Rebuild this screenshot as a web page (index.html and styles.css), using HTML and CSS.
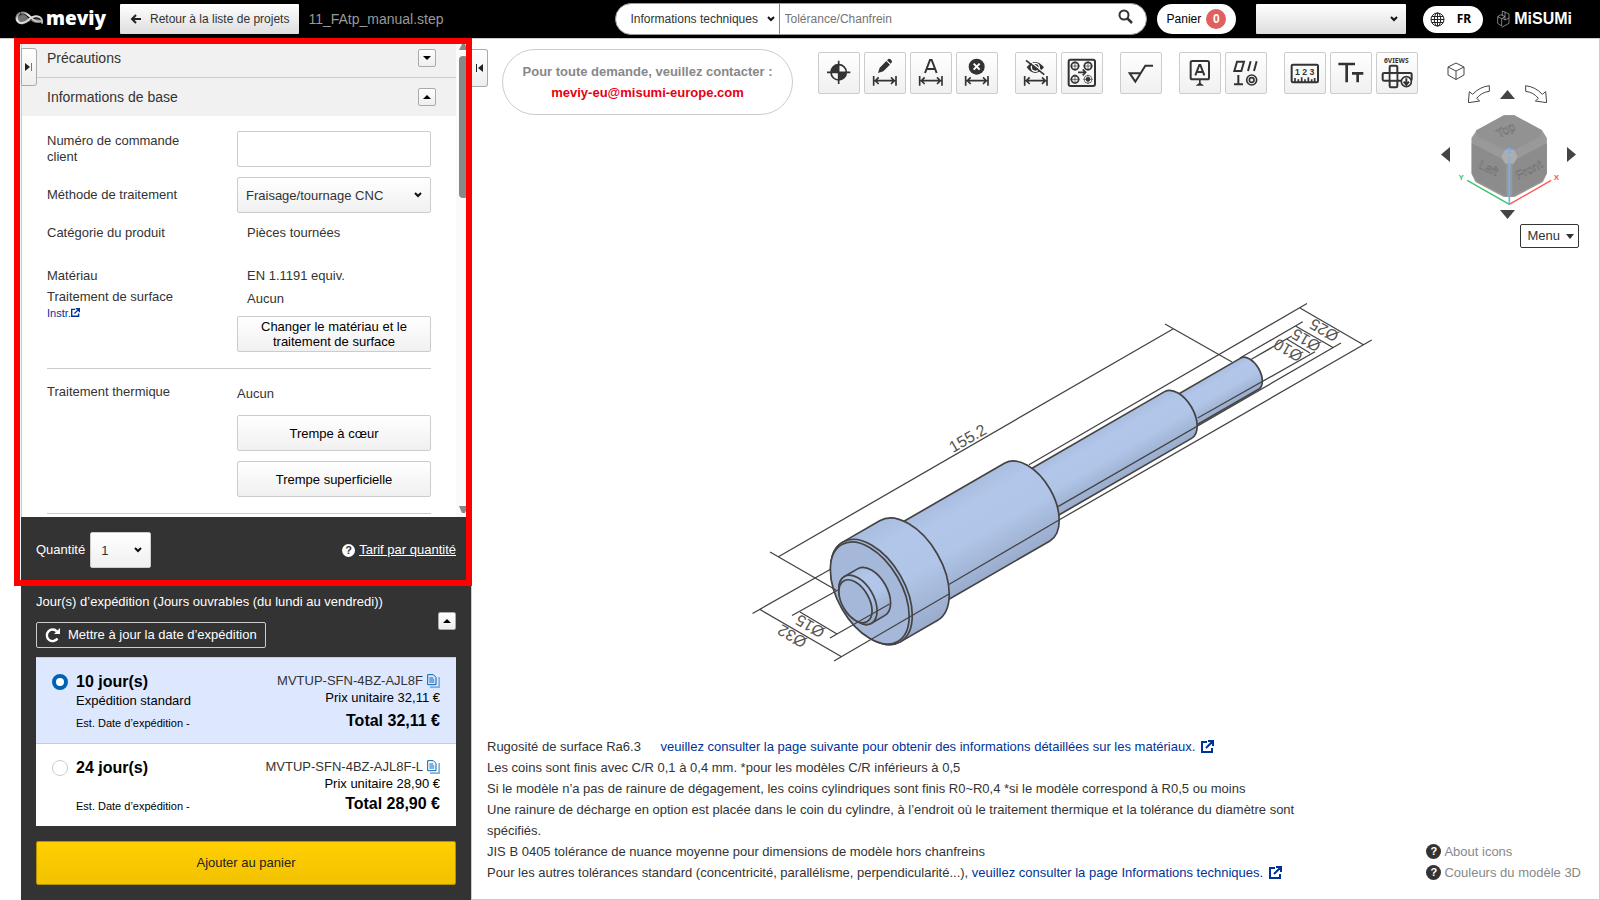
FILE: index.html
```html
<!DOCTYPE html>
<html lang="fr">
<head>
  <meta charset="UTF-8">
  <meta name="viewport" content="width=device-width, initial-scale=1.0">
  <title>meviy</title>
  <link rel="stylesheet" href="styles.css">
</head>
<body>
  <header class="header">
    <a class="logo" href="#" aria-label="meviy">
      <svg width="30" height="18" viewBox="0 0 90 54">
        <defs>
          <linearGradient id="silver" x1="0" x2="1" y1="0" y2="1">
            <stop offset="0" stop-color="#666"/>
            <stop offset=".35" stop-color="#eee"/>
            <stop offset="1" stop-color="#aaa"/>
          </linearGradient>
        </defs>
        <path d="M30 7C12 2 1 12 1 24c0 14 14 22 28 17c10-3 20-13 30-15c12-2 18 2 17 10c-2 5-16 4-24-1C42 29 34 12 22 12c-4 0-8 3-9 7C12 10 20 5 30 7z" fill="url(#silver)" opacity=".5"/>
        <path d="M16 8C4 14 2 30 12 37c10 6 20 0 28-7c10-9 22-14 33-9c8 4 9 13 8 20M18 8c14-2 22 6 30 15c8 9 20 14 32 10" fill="none" stroke="url(#silver)" stroke-width="6"/>
      </svg>
      <span class="logo-text">meviy</span>
    </a>
    <button class="back-btn">
      <svg width="12" height="12" viewBox="0 0 12 12"><path d="M11 6H2M6 2L2 6l4 4" fill="none" stroke="#222" stroke-width="2"/></svg>
      Retour à la liste de projets
    </button>
    <span class="file-name">11_FAtp_manual.step</span>

    <form class="search">
      <select class="search-type" aria-label="Type de recherche"><option>Informations techniques</option></select>
      <input class="search-input" type="text" placeholder="Tolérance/Chanfrein" aria-label="Recherche">
      <button class="search-btn" type="button" aria-label="Rechercher">
        <svg width="15" height="15" viewBox="0 0 15 15"><circle cx="6" cy="6" r="4.5" fill="none" stroke="#333" stroke-width="2"/><path d="M9.500 9.500L14 14" stroke="#333" stroke-width="2.500"/></svg>
      </button>
    </form>
    <a class="cart" href="#">Panier <span class="cart-count">0</span></a>
    <select class="account" aria-label="Compte"><option></option></select>
    <button class="lang">
      <svg width="15" height="15" viewBox="0 0 15 15" fill="none" stroke="#222"><circle cx="7.500" cy="7.500" r="6.500"/><ellipse cx="7.500" cy="7.500" rx="3.200" ry="6.500"/><path d="M7.500 1v13M1 7.500h13M2 4.500h11M2 10.500h11"/></svg>
      FR
    </button>
    <a class="misumi" href="#" aria-label="MiSUMi">
      <svg width="14" height="18" viewBox="0 0 42 54" fill="none" stroke="#bbb" stroke-width="2"><path d="M2 20l12 6v22L2 40zM14 26l10-6v10l12-6v16L14 52M2 20l10-6 12 6M24 20V6l-8-3v14M24 6l12 6v12M24 30l-8-5"/></svg>
      <span class="misumi-text">MiSUMi</span>
    </a>
  </header>

  <div class="workspace">
    <aside class="sidebar">
      <div class="settings">
        <button class="tab tab-left" aria-label="Ouvrir">
          <svg width="8" height="8" viewBox="0 0 8 8"><path d="M0 0l5 4-5 4z" fill="#222"/><path d="M6.500 0v8" stroke="#777"/></svg>
        </button>
        <div class="scroll-area">
          <div class="scroll-content">
            <div class="section-head">
              <h2>Précautions</h2>
              <button class="toggle" aria-label="Afficher les précautions"><svg width="8" height="4" viewBox="0 0 8 4"><path d="M0 0h8L4 4z"/></svg></button>
            </div>
            <div class="section-head">
              <h2>Informations de base</h2>
              <button class="toggle" aria-label="Masquer les informations"><svg width="8" height="4" viewBox="0 0 8 4"><path d="M0 4h8L4 0z"/></svg></button>
            </div>
            <div class="fields">
              <div class="field">
                <label class="label-wrap" for="order">Numéro de commande client</label>
                <input class="box" id="order" type="text">
              </div>
              <div class="field">
                <label class="label-mid" for="method">Méthode de traitement</label>
                <select class="box" id="method"><option>Fraisage/tournage CNC</option></select>
              </div>
              <div class="field">
                <span>Catégorie du produit</span>
                <span class="value">Pièces tournées</span>
              </div>
              <div class="field material">
                <span>Matériau</span>
                <span class="value">EN 1.1191 equiv.</span>
              </div>
              <div class="field surface">
                <div>
                  Traitement de surface
                  <a class="instr" href="#">Instr.<svg width="9" height="9" viewBox="0 0 13 13"><path d="M6 2H1v10h10V8M5 8l6-6M7 1h5v5" fill="none" stroke="#039" stroke-width="2"/></svg></a>
                </div>
                <div class="stack">
                  <span class="value">Aucun</span>
                  <button class="box">Changer le matériau et le traitement de surface</button>
                </div>
              </div>
              <hr>
              <div class="field thermal">
                <span>Traitement thermique</span>
                <div class="stack">
                  <span>Aucun</span>
                  <button class="box">Trempe à cœur</button>
                  <button class="box">Trempe superficielle</button>
                </div>
              </div>
              <hr>
            </div>
          </div>
          <div class="scrollbar">
            <svg width="9" height="6" viewBox="0 0 9 6"><path d="M0 6h9L6 0H3z" fill="#888"/></svg>
            <div class="thumb"></div>
            <svg width="9" height="7" viewBox="0 0 9 7"><path d="M0 0h9L6 7H3z" fill="#888"/></svg>
          </div>
        </div>
        <div class="quantity">
          <label for="qty">Quantité</label>
          <select class="box qty" id="qty"><option>1</option></select>
          <a class="price-link" href="#"><span class="help">?</span><u>Tarif par quantité</u></a>
        </div>
      </div>

      <div class="shipping">
        <div class="ship-head">
          <div>
            <p>Jour(s) d’expédition (Jours ouvrables (du lundi au vendredi))</p>
            <button class="refresh">
              <svg width="15" height="15" viewBox="0 0 15 15"><path d="M12.500 10.500A5.800 5.800 0 1 1 12 3.500" fill="none" stroke="#fff" stroke-width="2.400"/><path d="M15 0v6H9z" fill="#fff"/></svg>
              Mettre à jour la date d’expédition
            </button>
          </div>
          <button class="toggle" aria-label="Masquer"><svg width="8" height="4" viewBox="0 0 8 4"><path d="M0 4h8L4 0z"/></svg></button>
        </div>
        <div class="options">
          <label class="option selected">
            <input type="radio" name="ship" checked>
            <span class="option-left">
              <strong>10 jour(s)</strong>
              <span>Expédition standard</span>
              <small>Est. Date d’expédition -</small>
            </span>
            <span class="option-right">
              <span class="code">MVTUP-SFN-4BZ-AJL8F
                <svg width="13" height="14" viewBox="0 0 39 42"><path d="M9 42h30V9h-5v28H9z" fill="#7fb0dc"/><path d="M2 2h17l8 8v22H2zM7 12h12M7 18h15M7 24h15" fill="none" stroke="#0062b5" stroke-width="3"/></svg>
              </span>
              <span>Prix unitaire 32,11 €</span>
              <strong>Total 32,11 €</strong>
            </span>
          </label>
          <label class="option">
            <input type="radio" name="ship">
            <span class="option-left">
              <strong>24 jour(s)</strong>
              <small>Est. Date d’expédition -</small>
            </span>
            <span class="option-right">
              <span class="code">MVTUP-SFN-4BZ-AJL8F-L
                <svg width="13" height="14" viewBox="0 0 39 42"><path d="M9 42h30V9h-5v28H9z" fill="#7fb0dc"/><path d="M2 2h17l8 8v22H2zM7 12h12M7 18h15M7 24h15" fill="none" stroke="#0062b5" stroke-width="3"/></svg>
              </span>
              <span>Prix unitaire 28,90 €</span>
              <strong>Total 28,90 €</strong>
            </span>
          </label>
        </div>
        <button class="add-cart">Ajouter au panier</button>
      </div>
    </aside>

    <main class="viewer">
      <button class="tab tab-right" aria-label="Fermer">
        <svg width="8" height="8" viewBox="0 0 8 8"><path d="M7 0L2 4l5 4z" fill="#222"/><path d="M.5 0v8" stroke="#222"/></svg>
      </button>
      <div class="viewer-top">
        <div class="contact">
          <span>Pour toute demande, veuillez contacter :</span>
          <a href="#">meviy-eu@misumi-europe.com</a>
        </div>

        <div class="toolbar">
          <div class="tools">
            <button aria-label="Origine">
              <svg viewBox="3 3 120 120"><circle cx="62" cy="61" r="23" class="ln"/><path d="M27 61h70M62 26v70" class="ln"/><path d="M62 61V38a23 23 0 0 0-23 23zM62 61v23a23 23 0 0 0 23-23z"/></svg>
            </button>
            <button aria-label="Modifier la cote">
              <svg viewBox="3 3 120 120"><path d="M42 63l5-16 20-20 11 11-20 20zM69 25l4-4q4-2 8 2t3 7l-4 5z"/><path d="M29 72v29M96 72v29M34 86h57M44 76L34 86l10 10M81 76l10 10-10 10" class="ln"/></svg>
            </button>
            <button aria-label="Cote automatique">
              <svg viewBox="3 3 120 120"><path d="M45 63l15-39h5l15 39M50 51h25" class="ln thick"/><path d="M29 72v29M96 72v29M34 86h57M44 76L34 86l10 10M81 76l10 10-10 10" class="ln"/></svg>
            </button>
            <button aria-label="Supprimer la cote">
              <svg viewBox="3 3 120 120"><circle cx="62" cy="44" r="24"/><path d="M53 35l18 18M71 35L53 53" stroke="#fff" stroke-width="6"/><path d="M29 72v29M96 72v29M34 86h57M44 76L34 86l10 10M81 76l10 10-10 10" class="ln"/></svg>
            </button>
          </div>
          <div class="tools">
            <button aria-label="Masquer les cotes">
              <svg viewBox="3 3 120 120"><path d="M35 46q25-32 52 0q-27 34-52 0z"/><circle cx="61" cy="46" r="12" fill="none" stroke="#fff" stroke-width="4"/><path d="M38 22l52 43" stroke="#fff" stroke-width="4"/><path d="M33 25l55 43" class="ln"/><path d="M29 72v29M96 72v29M34 86h57M44 76L34 86l10 10M81 76l10 10-10 10" class="ln"/></svg>
            </button>
            <button aria-label="Trous">
              <svg viewBox="3 3 120 120"><rect x="23" y="23" width="79" height="79" rx="6" class="ln thick"/><g class="ln"><circle cx="42" cy="42" r="11"/><circle cx="81" cy="42" r="11"/><circle cx="42" cy="82" r="11"/><path d="M51 61h22M65 52l9 9-9 9"/></g><path d="M42 28v28M28 42h28M81 28v28M67 42h28M42 68v28M28 82h28M81 68v28M67 82h28" class="ln thin"/><circle cx="81" cy="82" r="12" class="ln thin"/><circle cx="81" cy="82" r="7"/></svg>
            </button>
          </div>
          <div class="tools">
            <button aria-label="Rugosité">
              <svg viewBox="3 3 120 120"><path d="M99 41H76L46 89 29 64h32" class="ln thick"/></svg>
            </button>
          </div>
          <div class="tools">
            <button aria-label="Référence">
              <svg viewBox="3 3 120 120"><rect x="35" y="27" width="55" height="55" rx="5" class="ln thick"/><path d="M49 70l12-31h3l12 31M53 60h19" class="ln thick"/><path d="M60 84h5v9l10 8H50l10-8z"/></svg>
            </button>
            <button aria-label="Tolérance géométrique">
              <svg viewBox="3 3 120 120"><path d="M28 57l8-28h21l-8 28zM69 57l8-29M87 57l8-29M27 97h27M40 97V69" class="ln thick"/><circle cx="80" cy="84" r="15" class="ln"/><circle cx="80" cy="84" r="7" class="ln"/></svg>
            </button>
          </div>
          <div class="tools">
            <button aria-label="Mesure">
              <svg viewBox="3 3 120 120"><rect x="23" y="38" width="79" height="53" rx="4" class="ln thick"/><text x="33" y="68" class="digits">1 2 3</text><path d="M33 90V78M43 90v-8M53 90V76M63 90v-8M73 90V76M83 90v-8M92 90V78" class="ln"/></svg>
            </button>
            <button aria-label="Taille du texte">
              <svg viewBox="3 3 120 120"><path d="M25 36h50M50 36v55M66 64h34M83 64v27" stroke="#333" stroke-width="8"/></svg>
            </button>
            <button aria-label="6 vues">
              <svg viewBox="3 3 120 120"><text x="24" y="32" class="views">6VIEWS</text><rect x="41" y="41" width="23" height="65" rx="4" class="ln thick"/><rect x="20" y="63" width="87" height="23" rx="4" class="ln thick"/><path d="M44 66h17v17H44z" fill="#fff" stroke="#999"/><circle cx="91" cy="89" r="15" class="dl"/><path d="M91 79v17M83 89l8 9 8-9" class="ln thick"/></svg>
            </button>
          </div>
        </div>

        <div class="view-nav">
          <button class="plain home" aria-label="Vue isométrique">
            <svg width="18" height="18" viewBox="0 0 18 18" fill="none" stroke="#444"><path d="M9 1l8 4v8l-8 4.500L1 13V5zM1 5l8 4 8-4M9 9v8.500"/></svg>
          </button>
          <div class="nav-row">
            <button class="plain" aria-label="Rotation gauche"><svg width="22" height="18" viewBox="0 0 66 54"><path d="M64 2Q34 6 14 28L4 20 1 53 35 48 26 40Q40 22 64 19z" fill="#fff" stroke="#444" stroke-width="3"/></svg></button>
            <button class="plain" aria-label="Haut"><svg width="15" height="9" viewBox="0 0 15 9"><path d="M0 9L7.500 0 15 9z" fill="#444"/></svg></button>
            <button class="plain" aria-label="Rotation droite"><svg width="22" height="18" viewBox="0 0 66 54"><path d="M2 2Q32 6 52 28L62 20 65 53 31 48 40 40Q26 22 2 19z" fill="#fff" stroke="#444" stroke-width="3"/></svg></button>
          </div>
          <div class="nav-mid">
            <button class="plain" aria-label="Gauche"><svg width="9" height="15" viewBox="0 0 9 15"><path d="M9 0v15L0 7.500z" fill="#444"/></svg></button>
            <svg class="cube" width="104" height="93" viewBox="110 190 312 280">
              <path d="M250 194h33l82 44 15 24v108l-12 25-85 45h-33l-85-45-12-25V262l15-22z" fill="#999"/>
              <path d="M252 194h29l84 46-6 17-75 41h-34l-77-41-7-17z" fill="#929292"/>
              <path d="M154 278l88 46 16 20v94l-90-46-14-24zM380 278l-88 46-16 20v94l90-46 14-24z" fill="#8c8c8c"/>
              <path d="M243 318l12-21h25l12 21-12 21h-25z" fill="#adadad"/>
              <g class="cube-text">
                <text transform="translate(236 262) rotate(-27)">Top</text>
                <text transform="translate(172 352) rotate(25)">Left</text>
                <text transform="translate(294 388) rotate(-27)">Front</text>
              </g>
              <path d="M267 462L140 390" stroke="#3ac569" stroke-width="4"/>
              <path d="M267 462l126-72" stroke="#f55" stroke-width="4"/>
              <path d="M267 462V318" stroke="#6fb1f5" stroke-width="5"/>
              <text class="axis" x="114" y="388" fill="#3ac569">Y</text>
              <text class="axis" x="401" y="389" fill="#f55">X</text>
              <text class="axis" x="259" y="307" fill="#6fb1f5">Z</text>
            </svg>
            <button class="plain" aria-label="Droite"><svg width="9" height="15" viewBox="0 0 9 15"><path d="M0 0v15l9-7.500z" fill="#444"/></svg></button>
          </div>
          <div class="nav-row">
            <button class="plain" aria-label="Bas"><svg width="15" height="9" viewBox="0 0 15 9"><path d="M0 0h15L7.500 9z" fill="#444"/></svg></button>
          </div>
          <button class="menu">Menu <svg width="8" height="5" viewBox="0 0 8 5"><path d="M0 0h8L4 5z" fill="#333"/></svg></button>
        </div>
      </div>

      <div class="stage">
        <svg class="model" width="650" height="380" viewBox="740 290 650 380">
          <defs>
            <linearGradient id="steel" x1="0" x2="0" y1="0" y2="1">
              <stop offset="0" stop-color="#a9bddf"/>
              <stop offset=".2" stop-color="#b1c6e9"/>
              <stop offset=".55" stop-color="#b0c5e8"/>
              <stop offset="1" stop-color="#9aaccc"/>
            </linearGradient>
          </defs>
          <!-- shaft, drawn from the far end to the head -->
          <g transform="translate(871.5 592) rotate(-30)" fill="url(#steel)" stroke="#444" stroke-width="1.700">
            <path d="M340-18H436.600A10.400 18 0 0 1 436.600 18H340z"/>
            <path d="M170-27H354A15.600 27 0 0 1 354 27H170z"/>
            <path d="M30-45H180A26 45 0 0 1 180 45H30z"/>
            <path d="M0-57.600H42.700A33.300 57.600 0 0 1 42.700 57.600H0A33.300 57.600 0 0 1 0-57.600z"/>
            <ellipse cx="0" cy="0" rx="33.300" ry="57.600" fill="#a5b8d9"/>
            <ellipse cx="-2" cy="0" rx="32" ry="56" fill="#a5b8d9"/>
            <path d="M-15.600-27H0A15.600 27 0 0 1 0 27H-15.600A15.600 27 0 0 1-15.600-27z"/>
            <ellipse cx="-15.600" cy="0" rx="15.600" ry="27"/>
            <ellipse cx="-18.500" cy="0" rx="13.500" ry="23.500" fill="#a5b8d9"/>
          </g>
          <!-- dimension and extension lines -->
          <path fill="none" stroke="#444" stroke-width="1.300" d="M778 557L1173 329M770 552l66 38M1165 324l67 38
            M760 609.500L842 657M752.500 613.500L831 569M834 661l115-67M948 585l111-65
            M800 612l37 22M792 615.500L838 590M830 638l59.500-34
            M1300 308l63 36.500M1029 464.700L1307 303.500M1059 520L1371.700 340
            M1295.500 326l37.500 21.500M1240 358l62.700-36.300M1058 506.600L1341 343
            M1286.700 339l23.300 14M1251 359.500l40.700-23.500M1197.700 418L1315 351.700"/>
          <g class="dim">
            <text transform="translate(953 453) rotate(-30)">155.2</text>
            <text transform="translate(808 639) rotate(210)">Ø32</text>
            <text transform="translate(826 629) rotate(210)">Ø15</text>
            <text transform="translate(1340 333) rotate(210)">Ø25</text>
            <text transform="translate(1322 343) rotate(210)">Ø15</text>
            <text transform="translate(1304 353) rotate(210)">Ø10</text>
          </g>
        </svg>
      </div>

      <div class="viewer-foot">
        <div class="notes">
          <p>Rugosité de surface Ra6.3 <a class="note-link" href="#">veuillez consulter la page suivante pour obtenir des informations détaillées sur les matériaux.<svg width="13" height="13" viewBox="0 0 13 13"><path d="M6 2H1v10h10V8M5 8l6-6M7 1h5v5" fill="none" stroke="#039" stroke-width="2"/></svg></a></p>
          <p>Les coins sont finis avec C/R 0,1 à 0,4 mm. *pour les modèles C/R inférieurs à 0,5</p>
          <p>Si le modèle n’a pas de rainure de dégagement, les coins cylindriques sont finis R0~R0,4 *si le modèle correspond à R0,5 ou moins</p>
          <p>Une rainure de décharge en option est placée dans le coin du cylindre, à l’endroit où le traitement thermique et la tolérance du diamètre sont spécifiés.</p>
          <p>JIS B 0405 tolérance de nuance moyenne pour dimensions de modèle hors chanfreins</p>
          <p>Pour les autres tolérances standard (concentricité, parallélisme, perpendicularité...), <a href="#">veuillez consulter la page Informations techniques.<svg width="13" height="13" viewBox="0 0 13 13"><path d="M6 2H1v10h10V8M5 8l6-6M7 1h5v5" fill="none" stroke="#039" stroke-width="2"/></svg></a></p>
        </div>
        <div class="help-links">
          <a href="#"><span class="help dark">?</span>About icons</a>
          <a href="#"><span class="help dark">?</span>Couleurs du modèle 3D</a>
        </div>
      </div>
    </main>
  </div>
</body>
</html>
```
FILE: styles.css
```css
* {
  box-sizing: border-box;
}

body {
  margin: 0;
  height: 100vh;
  display: flex;
  flex-direction: column;
  font-family: "Liberation Sans", Arial, sans-serif;
  font-size: 13px;
  line-height: 20px;
  color: #333;
  background: #fff;
}

button, input, select {
  font: inherit;
  color: inherit;
  margin: 0;
}

button {
  padding: 0;
}

p, h2 {
  margin: 0;
}

a {
  color: #039;
  text-decoration: none;
}

svg {
  flex: none;
}

select {
  appearance: none;
  background: url("data:image/svg+xml,%3Csvg xmlns='http://www.w3.org/2000/svg' width='8' height='6'%3E%3Cpath d='M1 1l3 3 3-3' fill='none' stroke='%23111' stroke-width='2'/%3E%3C/svg%3E") no-repeat right 8px center, linear-gradient(#fff, #f0f0f0);
}

/* header */
.header {
  display: flex;
  align-items: center;
  height: 39px;
  padding: 0 28px 0 15px;
  background: #000;
  border-bottom: 1px solid #ccc;
}

.logo {
  display: flex;
  align-items: center;
  gap: 1px;
  width: 105px;
  color: #fff;
}

.logo-text {
  font-family: "Open Sans", sans-serif;
  font-size: 19px;
  font-weight: 800;
  margin-top: -2px;
}

.back-btn {
  display: flex;
  align-items: center;
  gap: 8px;
  height: 30px;
  padding: 0 10px;
  font-size: 12px;
  border: 0;
  border-radius: 1px;
  background: linear-gradient(#fff, #ddd);
}

.file-name {
  margin-left: 9px;
  font-size: 14px;
  color: #999;
}

.search {
  display: flex;
  flex: none;
  width: 532px;
  height: 32px;
  margin-left: auto;
  overflow: hidden;
  border: 1px solid #999;
  border-radius: 16px;
  background: #fff;
}

.search-type {
  width: 164px;
  padding: 0 15px;
  font-size: 12px;
  border: 0;
  border-right: 1px solid #888;
  background-image: url("data:image/svg+xml,%3Csvg xmlns='http://www.w3.org/2000/svg' width='8' height='6'%3E%3Cpath d='M1 1l3 3 3-3' fill='none' stroke='%23111' stroke-width='2'/%3E%3C/svg%3E");
  background-position: right 4px center;
}

.search-input {
  flex: 1;
  padding: 0 5px;
  font-size: 12px;
  border: 0;
}

.search-input::placeholder {
  color: #757575;
}

.search-btn {
  width: 40px;
  border: 0;
  background: none;
}

.cart {
  display: flex;
  align-items: center;
  gap: 5px;
  height: 30px;
  margin-left: 10px;
  padding: 0 10px;
  font-size: 12px;
  color: #000;
  border-radius: 15px;
  background: #fff;
}

.cart-count {
  width: 20px;
  height: 20px;
  text-align: center;
  font-weight: bold;
  color: #fff;
  border-radius: 50%;
  background: #e06060;
}

.account {
  width: 150px;
  height: 30px;
  margin-left: 20px;
  border: 0;
  border-radius: 1px;
  background-image: url("data:image/svg+xml,%3Csvg xmlns='http://www.w3.org/2000/svg' width='8' height='6'%3E%3Cpath d='M1 1l3 3 3-3' fill='none' stroke='%23111' stroke-width='2'/%3E%3C/svg%3E"), linear-gradient(#fff, #ddd);
}

.lang {
  display: flex;
  align-items: center;
  justify-content: space-between;
  width: 60px;
  height: 27px;
  margin: 0 14px 0 17px;
  padding: 0 12px 0 7px;
  font-family: "Noto Sans", sans-serif;
  font-size: 12px;
  font-weight: bold;
  color: #000;
  border: 0;
  border-radius: 14px;
  background: #fff;
}

.misumi {
  display: flex;
  align-items: center;
  gap: 3px;
  color: #fff;
}

.misumi-text {
  font-size: 16px;
  font-weight: bold;
}

/* left panel */
.workspace {
  display: flex;
  flex: 1;
  min-height: 0;
  padding-left: 21px;
}

.sidebar {
  display: flex;
  flex: none;
  flex-direction: column;
  width: 450px;
  color: #fff;
  background: #333;
}

.settings {
  position: relative;
  display: flex;
  flex: 1;
  flex-direction: column;
  min-height: 0;
}

/* red frame over the settings */
.settings::after {
  content: "";
  position: absolute;
  inset: -1px -1px 0 -7px;
  border: 6px solid #f00;
  pointer-events: none;
  z-index: 2;
}

.scroll-area {
  display: flex;
  flex: 1;
  min-height: 0;
  overflow: hidden;
  color: #333;
  border-left: 1px solid #ccc;
  background: #fff;
}

.scroll-content {
  flex: 1;
}

.scrollbar {
  display: flex;
  flex-direction: column;
  width: 15px;
  padding: 5px 3px 4px;
  background: #fafafa;
}

.thumb {
  width: 9px;
  height: 142px;
  margin: 6px 0 auto;
  border-radius: 4px;
  background: #888;
}

.tab {
  position: absolute;
  z-index: 1;
  display: flex;
  align-items: center;
  justify-content: center;
  width: 16px;
  height: 38px;
  border: 1px solid #aaa;
  background: linear-gradient(#fff, #eee);
}

.tab-left {
  top: 9px;
  left: 0;
  border-radius: 0 3px 3px 0;
}

.tab-right {
  top: 10px;
  left: 0;
  border-left: 0;
  border-radius: 0 3px 3px 0;
}

.section-head {
  display: flex;
  align-items: center;
  justify-content: space-between;
  height: 38px;
  padding: 0 20px 0 25px;
  background: #f1f1f1;
}

.section-head + .section-head {
  height: 39px;
  border-top: 1px solid #ccc;
}

.section-head h2 {
  font-size: 14px;
  font-weight: normal;
}

.toggle {
  display: flex;
  align-items: center;
  justify-content: center;
  width: 18px;
  height: 18px;
  border: 1px solid #aaa;
  border-radius: 2px;
  background: linear-gradient(#fff, #eee);
}

.fields {
  display: flex;
  flex-direction: column;
  gap: 10px;
  padding: 15px 25px 0;
}

.field {
  display: grid;
  grid-template-columns: 190px 1fr;
}

.label-wrap {
  padding: 2px 50px 0 0;
  line-height: 16px;
}

.label-mid {
  align-self: center;
}

.value {
  padding-left: 10px;
}

.box {
  width: 100%;
  height: 36px;
  padding: 0 8px;
  line-height: 15px;
  border: 1px solid #ccc;
  border-radius: 2px;
}

button.box {
  padding: 0 20px;
  color: #000;
  background: linear-gradient(#fff, #f0f0f0);
}

.material {
  margin-top: 13px;
}

.surface {
  margin-top: -9px;
}

.stack {
  display: flex;
  flex-direction: column;
  gap: 10px;
  padding-top: 2px;
}

.surface .stack {
  gap: 7px;
}

.thermal .stack span {
  margin-bottom: 1px;
}

.instr {
  display: block;
  font-size: 11px;
  line-height: 12px;
}

hr {
  width: 100%;
  margin: 6px 0 3px;
  border: 0;
  border-top: 1px solid #ccc;
}

.quantity {
  display: flex;
  align-items: center;
  gap: 5px;
  padding: 15px 15px 18px;
}

.qty {
  width: 61px;
  padding: 0 10px;
  color: #333;
}

.price-link {
  display: flex;
  align-items: center;
  gap: 4px;
  margin-left: auto;
  color: #fff;
}

.help {
  width: 13px;
  height: 13px;
  line-height: 13px;
  font-size: 11px;
  font-weight: bold;
  text-align: center;
  color: #333;
  border-radius: 50%;
  background: #fff;
}

/* shipping */
.shipping {
  padding: 6px 15px 15px;
}

.ship-head {
  display: flex;
  align-items: center;
  justify-content: space-between;
}

.ship-head .toggle {
  margin-bottom: 8px;
}

.refresh {
  display: flex;
  align-items: center;
  gap: 8px;
  height: 26px;
  margin: 10px 0 9px;
  padding: 0 8px;
  border: 1px solid #ccc;
  border-radius: 2px;
  background: none;
}

.options {
  margin-bottom: 15px;
  color: #000;
  background: #fff;
}

.option {
  display: flex;
  min-height: 83px;
  padding: 14px 16px 12px;
  border-top: 1px solid #ccc;
}

.selected {
  background: #dde8ff;
}

.option input {
  appearance: none;
  width: 16px;
  height: 16px;
  margin: 2px 8px 0 0;
  border: 1px solid #ccc;
  border-radius: 50%;
  background: #fff;
}

.option input:checked {
  border: 4px solid #0062b5;
}

.option-left, .option-right {
  display: flex;
  flex-direction: column;
  line-height: 17px;
}

.option-left {
  flex: 1;
}

.option-right {
  align-items: flex-end;
}

.option strong {
  font-size: 16px;
  line-height: 20px;
}

.option small {
  margin-top: auto;
  font-size: 11px;
  line-height: 16px;
}

.option-right strong {
  margin-top: auto;
}

.selected .option-right strong {
  padding-top: 5px;
}

.code {
  display: flex;
  align-items: center;
  gap: 4px;
  color: #333;
}

.add-cart {
  display: block;
  width: 100%;
  height: 44px;
  color: #222;
  border: 1px solid #b39200;
  border-radius: 2px;
  background: linear-gradient(#ffcf00, #f2c200);
}

/* 3D viewer */
.viewer {
  position: relative;
  display: flex;
  flex: 1;
  flex-direction: column;
  border: 1px solid #ccc;
  border-top: 0;
}

.viewer-top {
  display: flex;
  align-items: flex-start;
  padding: 10px 20px 0 30px;
}

.contact {
  display: flex;
  flex-direction: column;
  align-items: center;
  justify-content: center;
  width: 291px;
  height: 66px;
  line-height: 21px;
  font-weight: bold;
  color: #888;
  border: 1px solid #ccc;
  border-radius: 33px;
}

.contact a {
  color: #e60012;
}

.toolbar {
  display: flex;
  gap: 17px;
  margin: 3px 0 0 25px;
}

.tools {
  display: flex;
  gap: 4px;
}

.tools button {
  width: 42px;
  height: 42px;
  border: 1px solid #ccc;
  border-radius: 2px;
  background: linear-gradient(#fff, #f0f0f0);
}

.tools svg {
  display: block;
  width: 40px;
  height: 40px;
  fill: #333;
}

.tools .ln {
  fill: none;
  stroke: #333;
  stroke-width: 5;
}

.tools .thick {
  stroke-width: 6;
}

.tools .thin {
  stroke-width: 2;
}

.tools .dl {
  fill: #fff;
  stroke: #333;
  stroke-width: 5;
}

.digits {
  font-size: 26px;
  font-weight: bold;
}

.views {
  font-family: "Noto Sans", sans-serif;
  font-size: 20px;
  font-weight: bold;
}

.view-nav {
  display: flex;
  flex-direction: column;
  width: 138px;
  margin: 13px 0 0 auto;
}

.plain {
  display: flex;
  border: 0;
  background: none;
}

.home {
  margin-left: 6px;
}

.nav-row {
  display: flex;
  align-items: center;
  justify-content: center;
  gap: 10px;
  margin-top: 5px;
  padding-right: 5px;
}

.nav-mid {
  display: flex;
  align-items: center;
  justify-content: space-between;
  margin-top: 11px;
  padding-right: 3px;
}

.nav-mid .plain {
  margin-bottom: 12px;
}

.nav-mid + .nav-row {
  margin-top: 3px;
}

.cube-text {
  font-size: 36px;
  fill: #b5b5b5;
  stroke: #707070;
  stroke-width: 2;
}

.axis {
  font-size: 24px;
  font-weight: bold;
}

.menu {
  display: flex;
  align-items: center;
  gap: 6px;
  align-self: flex-end;
  height: 24px;
  margin-top: 5px;
  padding: 0 4px 0 6px;
  border: 1px solid #333;
  border-radius: 2px;
  background: #fff;
}

.stage {
  display: flex;
  flex: 1;
  align-items: center;
  justify-content: center;
  min-height: 0;
  padding: 0 0 24px 58px;
}

.dim {
  font-size: 16px;
  fill: #555;
}

.viewer-foot {
  display: flex;
  align-items: flex-end;
  justify-content: space-between;
  padding: 0 18px 16px 15px;
  line-height: 21px;
}

.notes {
  max-width: 830px;
}

.notes svg {
  margin-left: 6px;
  vertical-align: -2px;
}

.note-link {
  margin-left: 16px;
}

.help-links a {
  display: flex;
  align-items: center;
  gap: 3px;
  color: #888;
}

.dark {
  width: 15px;
  height: 15px;
  line-height: 15px;
  color: #fff;
  background: #333;
}
```
